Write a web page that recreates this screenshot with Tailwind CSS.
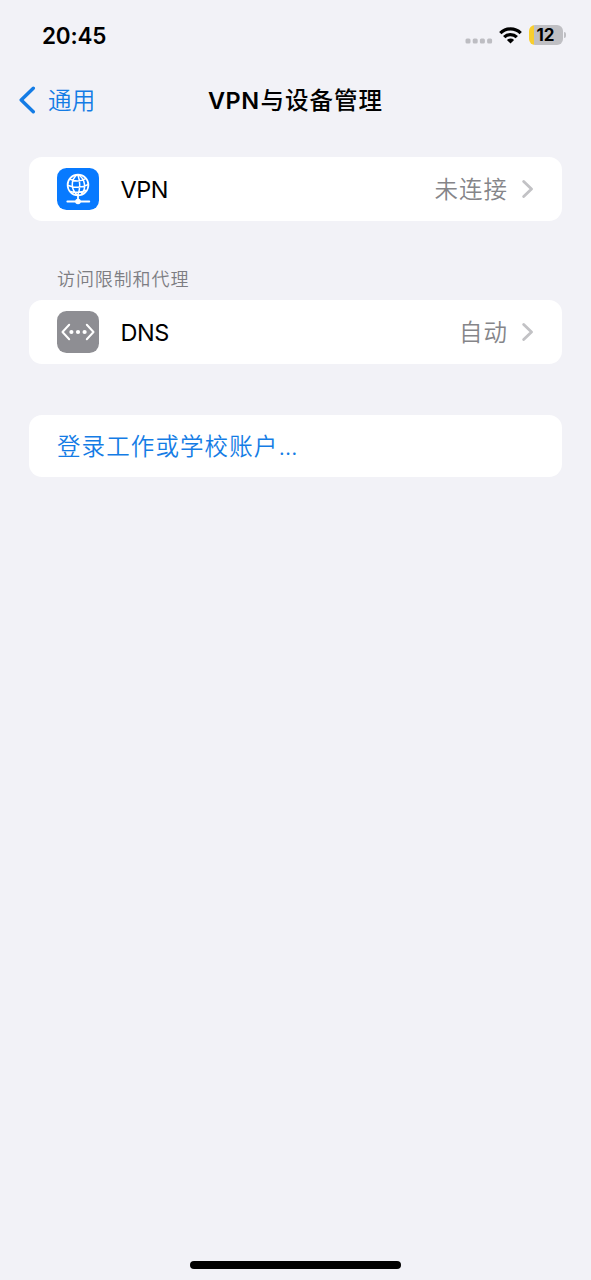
<!DOCTYPE html>
<html lang="zh-CN">
<head>
<meta charset="utf-8">
<meta name="viewport" content="width=device-width, initial-scale=1">
<title>VPN与设备管理</title>
<script src="https://cdn.jsdelivr.net/npm/@tailwindcss/browser@4"></script>
</head>
<body class="flex h-screen flex-col overflow-hidden bg-[#f2f2f7] font-['Inter','Noto_Sans_CJK_SC',sans-serif] text-black">
  <header class="flex h-[70px] shrink-0 items-center justify-between pr-[25px] pl-[42px]">
    <span class="pt-[2px] text-[22.5px] leading-[30px] font-semibold tracking-[-0.2px]">20:45</span>
    <div class="flex items-center">
      <svg class="mt-[12px] mr-[6px] h-[6px] w-[28px]" viewBox="0 0 28 6" fill="#bdbdc2"><rect x="0.5" y="0.5" width="5" height="5" rx="1.5"/><rect x="7.7" y="0.5" width="5" height="5" rx="1.5"/><rect x="14.9" y="0.5" width="5" height="5" rx="1.5"/><rect x="22.1" y="0.5" width="5" height="5" rx="1.5"/></svg>
      <svg class="mr-[7px] h-[17px] w-[23px]" viewBox="0 0 23 17" fill="none" stroke="#000" stroke-width="3.3"><path d="M1.3 6.1a14.6 14.6 0 0 1 20.4 0"/><path d="M5.2 10.1a9 9 0 0 1 12.6 0"/><path d="M11.5 16.6 7.9 13a5.1 5.1 0 0 1 7.2 0Z" fill="#000" stroke="none"/></svg>
      <div class="flex h-[20px] w-[34px] items-center justify-center rounded-[6px] bg-[linear-gradient(90deg,#f8ce2e_5px,#bfbfc3_5px)] text-[17px] leading-none font-bold"><span class="pt-px">12</span></div>
      <div class="ml-[1.5px] h-[6px] w-[2px] rounded-r-full bg-[#bfbfc3]"></div>
    </div>
  </header>

  <nav class="grid h-[60px] shrink-0 grid-cols-[1fr_auto_1fr] items-center px-[19px]">
    <a class="flex items-center text-[#147ce5]">
      <svg class="mr-[12px] h-[28px] w-[17px]" viewBox="0 0 17 28" fill="none" stroke="currentColor" stroke-width="3.4" stroke-linecap="round" stroke-linejoin="round"><path d="M14.3 2.2 2.2 14l12.1 11.8"/></svg>
      <span class="pt-[2px] text-[23.5px] leading-[30px] font-[350] tracking-[0.3px]">通用</span>
    </a>
    <h1 class="pt-[2px] text-[23.5px] leading-[30px] font-medium tracking-[1px]"><span class="mr-px font-semibold tracking-[0.4px]">VPN</span>与设备管理</h1>
  </nav>

  <main class="px-[29px] pt-[26.5px]">
    <section class="flex h-[64px] items-center rounded-[13px] bg-white px-[28px]">
      <svg class="mr-[21.5px] h-[42px] w-[42px]" viewBox="0 0 42 42" fill="none" stroke="#fff" stroke-width="1.5">
        <rect width="42" height="42" rx="9.5" fill="#087aff" stroke="none"/>
        <circle cx="21" cy="17" r="10.4" stroke-width="1.7"/>
        <path d="M20 6.7c-6.4 5.3-6.4 15 .7 20.6M20.8 6.7c2.3 6 2.3 14.4 0 20.6M21 6.7c7 4 9 13.8 3.2 19.7M12.6 11c5.3 2.8 11.7 2.3 16.5-.7M10.7 17.2c6.2 2.9 14.4 2.8 20.6-.7M13.3 23.5c5 1.3 11.2 1 16-1.3"/>
        <path d="M21 27v6M10.3 33.5h22" stroke-width="1.8" stroke-linecap="round"/>
        <circle cx="21" cy="33.5" r="2.8" fill="#fff" stroke="none"/>
      </svg>
      <span class="pt-[2px] text-[23.5px] leading-[30px] tracking-[-0.5px]">VPN</span>
      <span class="ml-auto pt-[2px] text-[23.5px] leading-[30px] font-[350] tracking-[1px] text-[#858589]">未连接</span>
      <svg class="ml-[14px] h-[20px] w-[12px]" viewBox="0 0 12 20" fill="none" stroke="#c2c2c5" stroke-width="2.8" stroke-linecap="round" stroke-linejoin="round"><path d="m1.7 2.5 7.8 7.5-7.8 7.5"/></svg>
    </section>

    <h2 class="mt-[46.5px] px-[28px] text-[18px] leading-[26px] font-[350] tracking-[0.9px] text-[#7d7d82]">访问限制和代理</h2>

    <section class="mt-[7px] flex h-[64px] items-center rounded-[13px] bg-white px-[28px]">
      <svg class="mr-[21.5px] h-[42px] w-[42px]" viewBox="0 0 42 42">
        <rect width="42" height="42" rx="9.5" fill="#8e8e93"/>
        <path d="M12.2 13.7 5.5 21l6.7 7.3M29.8 13.7 36.5 21l-6.7 7.3" fill="none" stroke="#fff" stroke-width="2" stroke-linecap="round" stroke-linejoin="round"/>
        <g fill="#fff"><circle cx="14.4" cy="21" r="2.1"/><circle cx="21" cy="21" r="2.1"/><circle cx="27.6" cy="21" r="2.1"/></g>
      </svg>
      <span class="pt-[2px] text-[23.5px] leading-[30px] tracking-[-0.5px]">DNS</span>
      <span class="ml-auto pt-[2px] text-[23.5px] leading-[30px] font-[350] tracking-[1px] text-[#858589]">自动</span>
      <svg class="ml-[14px] h-[20px] w-[12px]" viewBox="0 0 12 20" fill="none" stroke="#c2c2c5" stroke-width="2.8" stroke-linecap="round" stroke-linejoin="round"><path d="m1.7 2.5 7.8 7.5-7.8 7.5"/></svg>
    </section>

    <section class="mt-[51px] flex h-[62px] items-center rounded-[13px] bg-white px-[28px]">
      <a class="pt-[2px] text-[23.5px] leading-[30px] font-[350] tracking-[1.1px] text-[#147ce5]">登录工作或学校账户<span class="tracking-[-0.3px]">...</span></a>
    </section>
  </main>

  <footer class="mt-auto flex justify-center pb-[11px]">
    <div class="h-[8px] w-[211px] rounded-full bg-black"></div>
  </footer>
</body>
</html>
